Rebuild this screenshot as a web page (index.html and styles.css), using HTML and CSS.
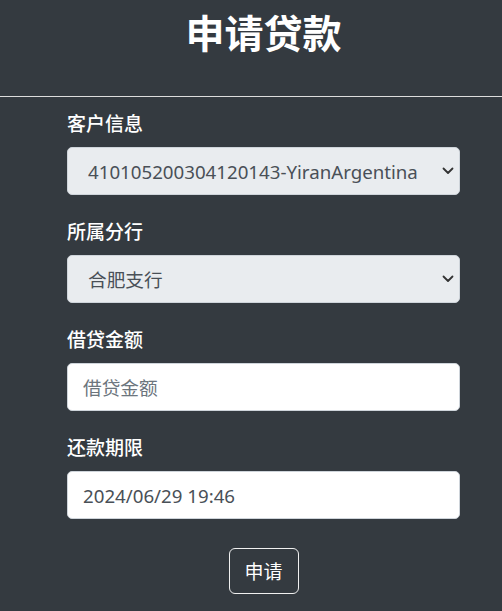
FILE: index.html
```html
<!DOCTYPE html>
<html lang="zh-CN">
<head>
<meta charset="utf-8">
<title>申请贷款</title>
<link rel="stylesheet" href="styles.css">
</head>
<body>
<div class="page">
  <div class="container">
    <h1 class="title">申请贷款</h1>
  </div>
  <hr class="divider">
  <form class="container form">
    <div class="group">
      <label class="label" for="customer">客户信息</label>
      <div class="select-wrap">
        <select id="customer" class="control select">
          <option>410105200304120143-YiranArgentina</option>
        </select>
        <svg class="chevron" width="12" height="8" viewBox="0 0 12 8" aria-hidden="true"><path d="M1.5 1.5 L6 6 L10.5 1.5" fill="none" stroke="#333" stroke-width="1.8" stroke-linecap="round" stroke-linejoin="round"/></svg>
      </div>
    </div>
    <div class="group">
      <label class="label" for="branch">所属分行</label>
      <div class="select-wrap">
        <select id="branch" class="control select">
          <option>合肥支行</option>
        </select>
        <svg class="chevron" width="12" height="8" viewBox="0 0 12 8" aria-hidden="true"><path d="M1.5 1.5 L6 6 L10.5 1.5" fill="none" stroke="#333" stroke-width="1.8" stroke-linecap="round" stroke-linejoin="round"/></svg>
      </div>
    </div>
    <div class="group">
      <label class="label" for="amount">借贷金额</label>
      <input id="amount" class="control input" type="text" placeholder="借贷金额">
    </div>
    <div class="group">
      <label class="label" for="deadline">还款期限</label>
      <input id="deadline" class="control input" type="text" value="2024/06/29 19:46">
    </div>
    <div class="actions">
      <button type="button" class="btn">申请</button>
    </div>
  </form>
</div>
</body>
</html>
```

FILE: styles.css
```css
html, body {
  margin: 0;
  padding: 0;
  background: #343a40;
}

body {
  font-family: "Noto Sans", "Noto Sans CJK SC", sans-serif;
  color: #fff;
  height: 611px;
  overflow: hidden;
}

.container {
  margin-left: 67px;
  width: 393px;
}

.title {
  margin: 0;
  padding-top: 8px;
  font-family: "Noto Sans CJK SC", sans-serif;
  font-size: 39px;
  line-height: 46px;
  font-weight: 700;
  text-align: center;
  color: #fff;
}

.divider {
  margin: 42px 0 0;
  border: 0;
  height: 1px;
  background: #dcdcdc;
}

.form {
  display: flex;
  flex-direction: column;
  padding-top: 11px;
}

.group {
  display: flex;
  flex-direction: column;
  margin-bottom: 21px;
}

.label {
  font-family: "Noto Sans CJK SC", sans-serif;
  font-size: 19px;
  line-height: 30px;
  font-weight: 500;
  margin-bottom: 9px;
  color: #fff;
}

.control {
  box-sizing: border-box;
  width: 393px;
  height: 48px;
  border: 1px solid #ced4da;
  border-radius: 5px;
  font-family: "Noto Sans", "Noto Sans CJK SC", sans-serif;
  font-size: 18.7px;
  color: #495057;
  margin: 0;
  outline: none;
}

.select-wrap {
  position: relative;
  width: 393px;
}

.select {
  appearance: none;
  -webkit-appearance: none;
  background: #e9ecef;
  padding: 0 40px 0 20px;
  display: block;
}

.chevron {
  position: absolute;
  right: 6px;
  top: 20px;
  pointer-events: none;
}

.input {
  background: #fff;
  padding: 0 15px;
  display: block;
}

.input::placeholder {
  color: #6c757d;
  opacity: 1;
}

.actions {
  display: flex;
  justify-content: center;
  padding-top: 8px;
}

.btn {
  box-sizing: border-box;
  width: 70px;
  height: 46px;
  background: transparent;
  border: 1px solid #f0f0f0;
  border-radius: 6px;
  color: #fff;
  font-family: "Noto Sans CJK SC", sans-serif;
  font-size: 19px;
  line-height: 28px;
  padding: 0;
}
```
